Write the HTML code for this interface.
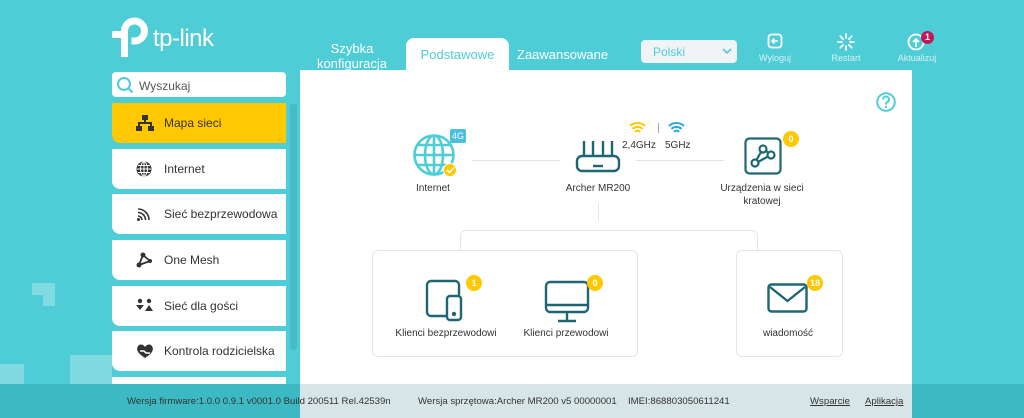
<!DOCTYPE html>
<html><head><meta charset="utf-8"><style>
*{margin:0;padding:0;box-sizing:border-box}
body{width:1024px;height:418px;overflow:hidden;background:#4ecdd6;font-family:"Liberation Sans",sans-serif;position:relative;color:#333}
.a{position:absolute}
.deco{position:absolute;background:#7fdbe1}
.item{position:absolute;left:112px;width:174px;height:40px;background:#fff;border-radius:0 0 0 8px;font-size:12px;color:#333}
.item span{position:absolute;left:52px;top:13px}
.item svg{position:absolute;left:24px;top:12px}
.lbl{position:absolute;font-size:10px;color:#333;text-align:center;line-height:13px}
.badge{position:absolute;width:16px;height:16px;border-radius:50%;background:#ffc800;color:#fff;font-size:9px;text-align:center;line-height:16px;font-weight:bold}
.box{position:absolute;border:1px solid #e3e6e7;border-radius:6px;background:#fff}
.hl{position:absolute;background:#e3e6e7}
.hdr{position:absolute;font-size:9px;color:#d5f3f5;text-align:center;width:60px}
.ft{position:absolute;top:396px;font-size:9.6px;color:#333}
</style></head><body>
<div class="deco" style="left:32px;top:283px;width:23px;height:12px"></div>
<div class="deco" style="left:43px;top:283px;width:12px;height:23px"></div>
<div class="deco" style="left:0;top:364px;width:24px;height:34px"></div>
<div class="deco" style="left:70px;top:355px;width:42px;height:30px"></div>

<svg class="a" style="left:110px;top:14px" width="44" height="46" viewBox="0 0 44 46">
<path d="M14.5 43V17a10 10 0 1 1 10 10h-3" fill="none" stroke="#fff" stroke-width="7"/>
<rect x="2" y="17" width="16" height="7" rx="1.5" fill="#fff"/>
</svg>
<div class="a" style="left:153px;top:25px;font-size:24px;color:#fff;letter-spacing:-0.5px">tp-link</div>

<div class="a" style="left:310px;top:41px;width:84px;text-align:center;font-size:13px;color:#fff;line-height:15px">Szybka<br>konfiguracja</div>
<div class="a" style="left:406px;top:38px;width:103px;height:34px;background:#fff;border-radius:8px 8px 0 0"></div>
<div class="a" style="left:406px;top:47px;width:103px;text-align:center;font-size:13px;color:#4ecdd6">Podstawowe</div>
<div class="a" style="left:517px;top:47px;font-size:13px;color:#fff">Zaawansowane</div>
<div class="a" style="left:641px;top:40px;width:96px;height:23px;background:#f1f4f5;border-radius:4px;font-size:12px;color:#4ecdd6;padding:5px 0 0 12px">Polski</div>
<svg class="a" style="left:722px;top:47px" width="10" height="8"><path d="M1 2l4 4 4-4" stroke="#4ecdd6" stroke-width="1.6" fill="none"/></svg>

<svg class="a" style="left:767px;top:33px" width="16" height="16" viewBox="0 0 16 16"><rect x="1.5" y="1.5" width="13" height="13" rx="3" fill="none" stroke="#fff" stroke-width="1.8"/><path d="M11 8H5M7.5 5.5L5 8l2.5 2.5" stroke="#fff" stroke-width="1.6" fill="none"/></svg>
<div class="hdr" style="left:745px;top:53px">Wyloguj</div>
<svg class="a" style="left:837px;top:33px" width="18" height="18" viewBox="0 0 18 18" stroke="#fff" stroke-width="1.8" stroke-linecap="round"><path d="M9 1v4M9 13v4M1 9h4M13 9h4M3.3 3.3l2.8 2.8M11.9 11.9l2.8 2.8M3.3 14.7l2.8-2.8M11.9 6.1l2.8-2.8"/></svg>
<div class="hdr" style="left:816px;top:53px">Restart</div>
<svg class="a" style="left:907px;top:33px" width="18" height="18" viewBox="0 0 18 18"><circle cx="9" cy="9" r="7.5" fill="none" stroke="#fff" stroke-width="1.8"/><path d="M9 14V6M6 9l3-3 3 3" stroke="#fff" stroke-width="1.8" fill="none"/></svg>
<div class="a" style="left:921px;top:31px;width:13px;height:13px;border-radius:50%;background:#c2185b;color:#fff;font-size:9px;text-align:center;line-height:13px;font-weight:bold">1</div>
<div class="hdr" style="left:887px;top:53px">Aktualizuj</div>

<div class="a" style="left:112px;top:72px;width:174px;height:25px;background:#fff;border-radius:4px"></div>
<svg class="a" style="left:116px;top:76px" width="18" height="18"><circle cx="8" cy="8" r="6" fill="none" stroke="#4ecdd6" stroke-width="2"/><path d="M12.5 12.5l4 4" stroke="#4ecdd6" stroke-width="2.2"/></svg>
<div class="a" style="left:139px;top:79px;font-size:12px;color:#555">Wyszukaj</div>

<div class="item" style="top:103px;background:#ffc800"><svg width="18" height="16" viewBox="0 0 18 16" fill="#333"><rect x="6" y="0" width="6" height="5"/><rect x="8" y="5" width="2" height="4"/><rect x="2" y="7" width="14" height="2"/><rect x="2" y="7" width="2" height="4"/><rect x="14" y="7" width="2" height="4"/><rect x="0" y="11" width="6" height="5"/><rect x="12" y="11" width="6" height="5"/></svg><span>Mapa sieci</span></div>
<div class="item" style="top:149px"><svg width="16" height="16" viewBox="0 0 16 16"><circle cx="8" cy="8" r="7.5" fill="#333"/><path d="M1 8h14M8 1v14M2 4.5h12M2 11.5h12" stroke="#fff" stroke-width="1"/><ellipse cx="8" cy="8" rx="3.5" ry="7" fill="none" stroke="#fff" stroke-width="1"/></svg><span>Internet</span></div>
<div class="item" style="top:194px"><svg width="16" height="16" viewBox="0 0 16 16" fill="none" stroke="#333" stroke-width="1.6"><path d="M2 3a11 11 0 0 1 11 11M2 6.5a7.5 7.5 0 0 1 7.5 7.5M2 10a4 4 0 0 1 4 4"/><circle cx="2.5" cy="13.5" r="1.5" fill="#333" stroke="none"/></svg><span>Sieć bezprzewodowa</span></div>
<div class="item" style="top:240px"><svg width="16" height="16" viewBox="0 0 16 16"><path d="M7 3L3 13M7 3l7 6M3 13l11-4" stroke="#333" stroke-width="1.8"/><circle cx="7" cy="3" r="2.5" fill="#333"/><circle cx="3" cy="13" r="2.5" fill="#333"/><circle cx="14" cy="9" r="2" fill="#333"/></svg><span>One Mesh</span></div>
<div class="item" style="top:286px"><svg width="18" height="14" viewBox="0 0 18 14" fill="#333"><circle cx="4" cy="3" r="2.2"/><circle cx="13" cy="3" r="2.2"/><path d="M0 7h8L4 12zM9 13l4-6 4 6z"/></svg><span>Sieć dla gości</span></div>
<div class="item" style="top:331px"><svg width="18" height="16" viewBox="0 0 18 16"><path d="M9 15C3 11 0 8 1.5 4 3 0.5 7 1 9 4c2-3 6-3.5 7.5 0C18 8 15 11 9 15z" fill="#333"/><path d="M4 8h4l2 2h4" stroke="#fff" stroke-width="1.6" fill="none"/></svg><span>Kontrola rodzicielska</span></div>
<div class="item" style="top:377px"></div>
<div class="a" style="left:290px;top:104px;width:7px;height:246px;background:#45bcc6;border-radius:3px"></div>

<div class="a" style="left:300px;top:70px;width:612px;height:314px;background:#fff"></div>
<svg class="a" style="left:876px;top:92px" width="20" height="20" viewBox="0 0 20 20"><circle cx="10" cy="10" r="8.8" fill="none" stroke="#4ecdd6" stroke-width="2"/><path d="M7 7.5a3 3 0 1 1 4 2.8c-1 .4-1 1-1 2.2" stroke="#4ecdd6" stroke-width="2" fill="none"/><circle cx="10" cy="15" r="1.2" fill="#4ecdd6"/></svg>

<svg class="a" style="left:412px;top:133px" width="44" height="44" viewBox="0 0 44 44" fill="none" stroke="#4ecdd6" stroke-width="2.6"><circle cx="22" cy="22" r="19.5"/><ellipse cx="22" cy="22" rx="9" ry="19.5"/><path d="M22 2.5v39M2.5 22h39M5 12h34M5 32h34"/></svg>
<div class="a" style="left:450px;top:129px;width:16px;height:14px;background:#4bbfe0;border-radius:2px;color:#fff;font-size:9px;text-align:center;line-height:14px">4G</div>
<div class="a" style="left:443px;top:163px;width:14px;height:14px;border-radius:50%;background:#ffc800;border:1.5px solid #fff"></div>
<svg class="a" style="left:446px;top:166px" width="9" height="8"><path d="M1 4l2.5 2.5L8 1.5" stroke="#fff" stroke-width="1.6" fill="none"/></svg>
<div class="lbl" style="left:403px;top:182px;width:60px">Internet</div>
<div class="hl" style="left:472px;top:160px;width:88px;height:1px"></div>

<svg class="a" style="left:575px;top:138px" width="46" height="36" viewBox="0 0 46 36" fill="none" stroke="#1e6672" stroke-width="2.4"><path d="M9 3v15M18 3v15M28 3v15M37 3v15"/><rect x="2" y="18" width="42" height="15" rx="5"/><path d="M18 28h10"/></svg>
<div class="lbl" style="left:548px;top:182px;width:100px">Archer MR200</div>
<svg class="a" style="left:629px;top:121px" width="17" height="14" viewBox="0 0 17 14" fill="none" stroke="#ffc800" stroke-width="2"><path d="M1 5a11 11 0 0 1 15 0M3.5 8a7 7 0 0 1 10 0M6 11a3 3 0 0 1 5 0"/></svg>
<svg class="a" style="left:668px;top:121px" width="17" height="14" viewBox="0 0 17 14" fill="none" stroke="#2aa8e0" stroke-width="2"><path d="M1 5a11 11 0 0 1 15 0M3.5 8a7 7 0 0 1 10 0M6 11a3 3 0 0 1 5 0"/></svg>
<div class="a" style="left:658px;top:123px;width:1px;height:10px;background:#aaa"></div>
<div class="lbl" style="left:622px;top:139px">2,4GHz</div>
<div class="lbl" style="left:665px;top:139px">5GHz</div>
<div class="hl" style="left:636px;top:160px;width:88px;height:1px"></div>

<svg class="a" style="left:744px;top:137px" width="38" height="38" viewBox="0 0 38 38" fill="none" stroke="#1e6672" stroke-width="2.2"><rect x="1.5" y="1.5" width="35" height="35" rx="4"/><circle cx="19" cy="12" r="3.5"/><circle cx="27" cy="18" r="3.5"/><circle cx="11" cy="26" r="3.5"/><path d="M17 15l-4.5 8M22 14l2.5 2M14 25l10-5.5"/></svg>
<div class="badge" style="left:783px;top:131px">0</div>
<div class="lbl" style="left:712px;top:182px;width:100px">Urządzenia w sieci<br>kratowej</div>

<div class="hl" style="left:598px;top:203px;width:1px;height:18px"></div>
<div class="a" style="left:460px;top:230px;width:298px;height:22px;border:1px solid #e3e6e7;border-bottom:none;border-radius:6px 6px 0 0"></div>

<div class="box" style="left:372px;top:250px;width:266px;height:107px"></div>
<svg class="a" style="left:425px;top:279px" width="40" height="44" viewBox="0 0 40 44" fill="none" stroke="#1e6672" stroke-width="2.4"><path d="M22 37H6a4 4 0 0 1-4-4V6a4 4 0 0 1 4-4h24a4 4 0 0 1 4 4v10"/><rect x="22" y="17" width="14" height="24" rx="3" fill="#fff"/><circle cx="29" cy="35" r="1" fill="#1e6672"/></svg>
<div class="badge" style="left:466px;top:275px">1</div>
<div class="lbl" style="left:386px;top:327px;width:120px">Klienci bezprzewodowi</div>
<svg class="a" style="left:544px;top:280px" width="46" height="43" viewBox="0 0 46 43" fill="none" stroke="#1e6672" stroke-width="2.4"><rect x="2" y="2" width="42" height="30" rx="4"/><path d="M2 25h42M23 32v8M14 41h18"/></svg>
<div class="badge" style="left:587px;top:275px">0</div>
<div class="lbl" style="left:516px;top:327px;width:100px">Klienci przewodowi</div>

<div class="box" style="left:736px;top:250px;width:107px;height:107px"></div>
<svg class="a" style="left:767px;top:283px" width="41" height="30" viewBox="0 0 41 30" fill="none" stroke="#1e6672" stroke-width="2.4"><rect x="1.5" y="1.5" width="38" height="27" rx="3"/><path d="M3 4l17.5 14L38 4"/></svg>
<div class="badge" style="left:807px;top:275px">18</div>
<div class="lbl" style="left:738px;top:327px;width:100px">wiadomość</div>

<div class="a" style="left:0;top:384px;width:1024px;height:34px;background:#3db9c3"></div>
<div class="a" style="left:300px;top:384px;width:612px;height:34px;background:#d7e5e6"></div>
<div class="ft" style="left:127px">Wersja firmware:1.0.0 0.9.1 v0001.0 Build 200511 Rel.42539n</div>
<div class="ft" style="left:418px">Wersja sprzętowa:Archer MR200 v5 00000001</div>
<div class="ft" style="left:628px">IMEI:868803050611241</div>
<div class="ft" style="left:810px;text-decoration:underline">Wsparcie</div>
<div class="ft" style="left:865px;text-decoration:underline">Aplikacja</div>
</body></html>
